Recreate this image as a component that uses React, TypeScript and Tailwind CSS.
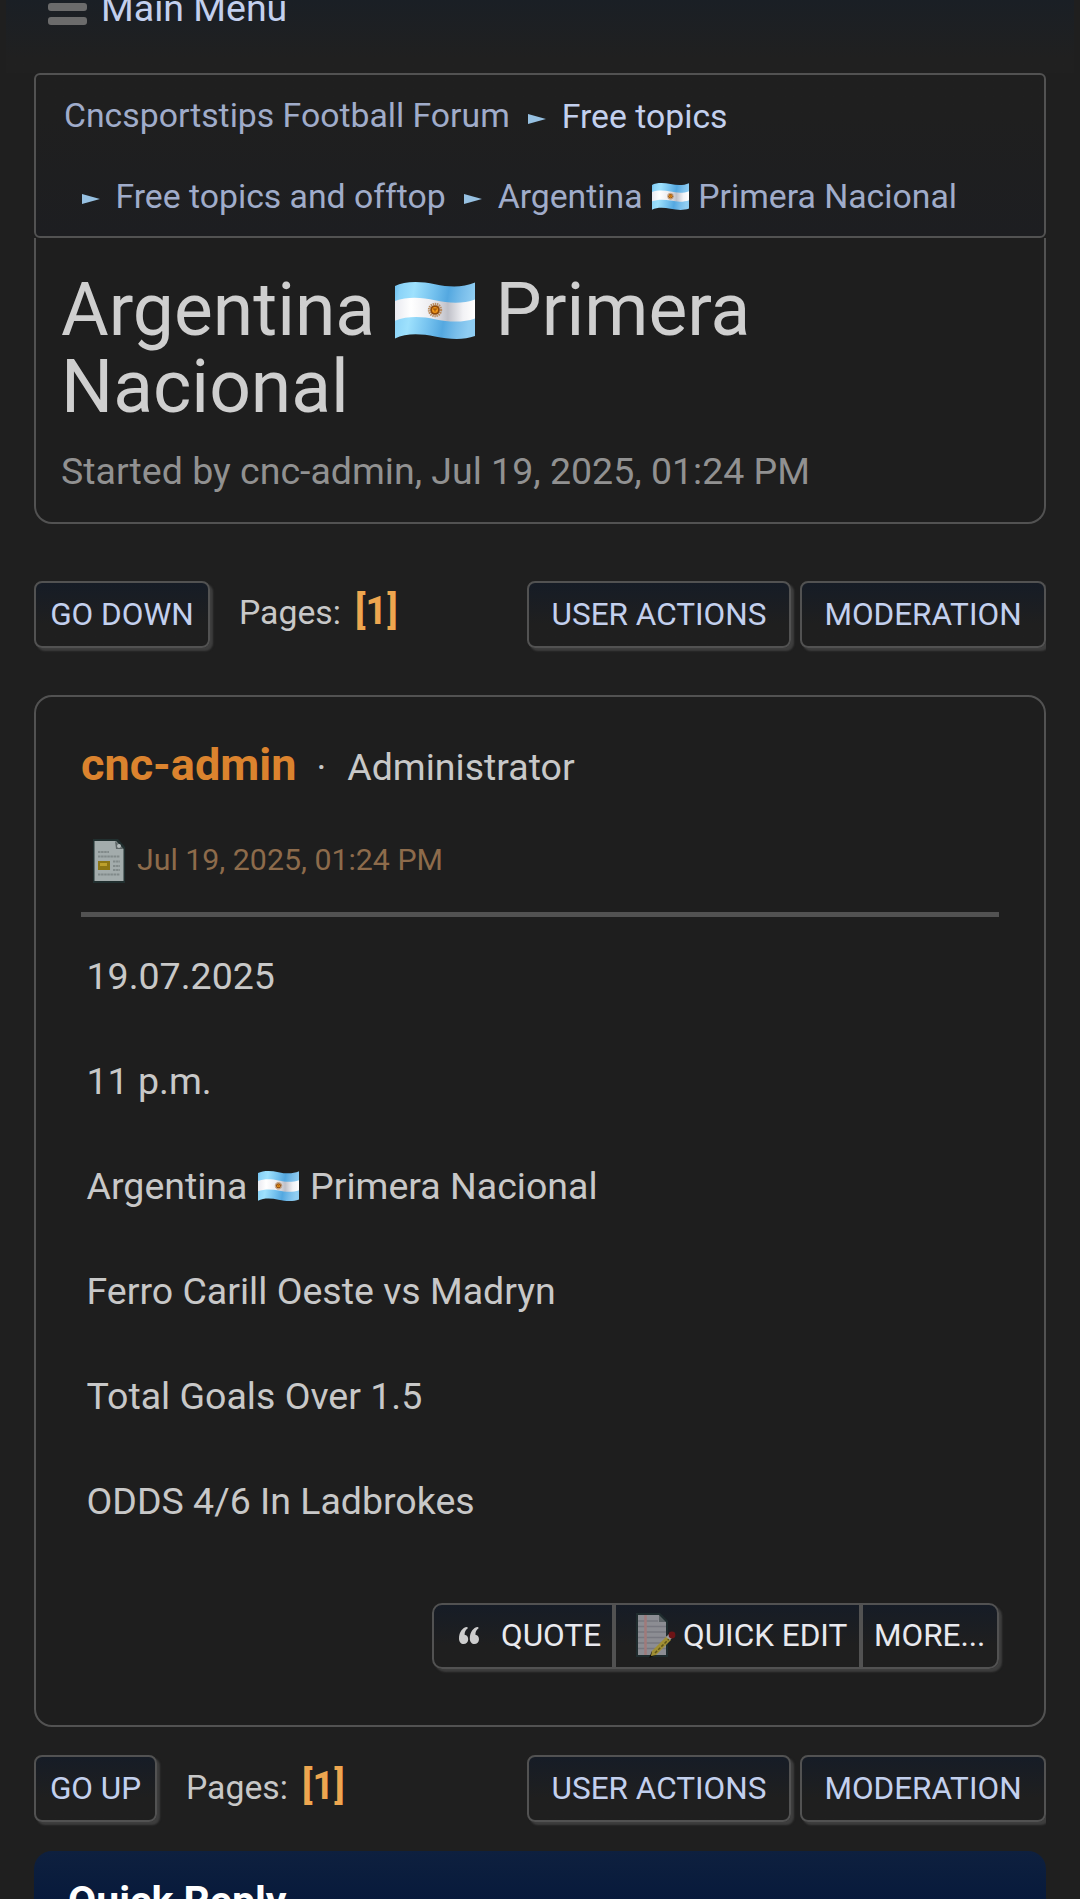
import { ReactNode } from "react";
import { twMerge } from "tailwind-merge";

function ArgentinaFlag({ className }: { className?: string }) {
  return (
    <svg
      viewBox="0 0 80 57"
      preserveAspectRatio="none"
      className={twMerge("inline-block", className)}
      role="img"
      aria-label="Argentina flag"
    >
      <defs>
        <linearGradient id="flag-blue" x1="0" x2="1" y1="0" y2="0.12">
          <stop offset="0" stopColor="#6dbfee" />
          <stop offset="0.08" stopColor="#8cd4f8" />
          <stop offset="0.25" stopColor="#9ee1fd" />
          <stop offset="0.5" stopColor="#74c1ee" />
          <stop offset="0.68" stopColor="#54a8e0" />
          <stop offset="0.85" stopColor="#78bdea" />
          <stop offset="1" stopColor="#8fcdf2" />
        </linearGradient>
        <linearGradient id="flag-white" x1="0" x2="1" y1="0" y2="0">
          <stop offset="0" stopColor="#e9eaf0" />
          <stop offset="0.2" stopColor="#ffffff" />
          <stop offset="0.45" stopColor="#ececf0" />
          <stop offset="0.66" stopColor="#bfc0c8" />
          <stop offset="0.85" stopColor="#f2f2f5" />
          <stop offset="1" stopColor="#ffffff" />
        </linearGradient>
      </defs>
      <path
        d="M0 4C9-.8 25-1 40 2.2S68 5.500 80 .5V54C68 58.500 54 57.300 40 54.500S11 51 0 56.500Z"
        fill="url(#flag-blue)"
      />
      <path
        d="M0 19C12 14.500 27 15.300 40 18.200S68 22 80 17.500V36.500C68 41 53 40 40 37.200S12 34 0 38.700Z"
        fill="url(#flag-white)"
      />
      <circle cx="40" cy="28" r="6" fill="none" stroke="#b98a5c" strokeWidth="2.400" strokeDasharray="1.400 0.700" />
      <circle cx="40" cy="28" r="4.800" fill="#8f4a0a" />
      <circle cx="40" cy="28" r="3" fill="#f0971a" />
      <path d="M38 27h4M40 27v2.500" stroke="#8f4a0a" strokeWidth="1" />
    </svg>
  );
}

function Arrow({ className }: { className?: string }) {
  return (
    <svg viewBox="0 0 18 10" className={twMerge("h-2.5 w-[18px] shrink-0", className)}>
      <path d="M0 0L18 5L0 10Z" fill="#97c1e2" />
    </svg>
  );
}

function PostIcon() {
  return (
    <svg viewBox="0 0 32 44" className="h-11 w-8 shrink-0">
      <path d="M0 0H25L32 8V44H0Z" fill="#233a3b" opacity="0.6" />
      <path d="M1.500 2H23L30.500 10V42H1.500Z" fill="#a3acac" />
      <path d="M22 2L30.500 10H23Z" fill="#5c6566" />
      <circle cx="26" cy="7" r="2" fill="#b4bcbc" />
      <path
        d="M5 13H16M5 17.500H27M20 22.500H27M20 27H27M20 31H27M5 35.500H27"
        stroke="#818a8a"
        strokeWidth="2"
        strokeDasharray="2.500 0.600"
      />
      <rect x="5" y="22" width="12" height="9" fill="#8d7614" />
      <rect x="7" y="24" width="7" height="3" fill="#bda02c" />
    </svg>
  );
}

function QuoteIcon() {
  return (
    <svg viewBox="0 0 20 17" className="h-[17px] w-5 shrink-0">
      <path
        d="M8 0C3.500 .5 0 5 0 11.500C0 15 2 17 4.600 17C7.200 17 9.200 15.200 9.200 12.300C9.200 9.600 7.600 8 5.600 7.800C5.600 5 6.500 3 9 1Z"
        fill="#cdcdcd"
      />
      <path
        d="M18.800 0C14.300 .5 10.800 5 10.800 11.500C10.800 15 12.800 17 15.400 17C18 17 20 15.200 20 12.300C20 9.600 18.400 8 16.400 7.800C16.400 5 17.300 3 19.800 1Z"
        fill="#cdcdcd"
      />
    </svg>
  );
}

function EditIcon() {
  return (
    <svg viewBox="0 0 40 46" className="h-[46px] w-10 shrink-0">
      <path d="M0 0H24L32 8V44H0Z" fill="#1f2c2e" />
      <path d="M2 2H23V9H30V42H2Z" fill="#8c8d93" />
      <path d="M2 8H22M2 13.500H30M2 19H30M2 24.500H30M2 30H30M2 35.500H30" stroke="#777880" strokeWidth="1.500" />
      <path d="M23 2L30 9H23Z" fill="#5b6265" />
      <path d="M9.500 2V42" stroke="#a07a7a" strokeWidth="2.500" />
      <path d="M13 45L16 38L20 42Z" fill="#120f06" />
      <path d="M16 38L31 23L35 27L20 42L15 43Z" fill="#a08f34" />
      <path d="M19 40L33 26" stroke="#5f5418" strokeWidth="1.500" strokeDasharray="3 1.500" />
      <path d="M30 24L33 21L36 25L34 27Z" fill="#9a9c9f" />
      <circle cx="36" cy="22" r="3.400" fill="#6e1416" />
    </svg>
  );
}

function BarButton({ children, className }: { children: ReactNode; className: string }) {
  return (
    <button
      type="button"
      className={twMerge(
        "flex h-[67px] shrink-0 items-center justify-center whitespace-nowrap rounded-lg border-2 border-[#525252] bg-linear-to-b from-[#161c26] to-[#1f1f1f] to-65% text-[31.5px] text-[#c3d0ee] shadow-[3px_3px_2px_0px_#3e3e3e]",
        className
      )}
    >
      {children}
    </button>
  );
}

function TopicBar({ label, labelClass, pagesClass }: { label: string; labelClass: string; pagesClass: string }) {
  return (
    <div className="flex h-[67px] items-start overflow-x-clip">
      <BarButton className={labelClass}>{label}</BarButton>
      <p className={twMerge("ml-[29px] text-[33.75px] leading-[60px] text-[#c8c8c8]", pagesClass)}>
        Pages:
        <span className="ml-3.5 text-[38px] font-bold text-[#eea64f]">[1]</span>
      </p>
      <div className="ml-auto flex gap-[9px]">
        <BarButton className="w-[264px]">USER ACTIONS</BarButton>
        <BarButton className="w-[246px]">MODERATION</BarButton>
      </div>
    </div>
  );
}

function QuickButton({ children, className }: { children: ReactNode; className: string }) {
  return (
    <button
      type="button"
      className={twMerge(
        "flex h-full items-center whitespace-nowrap border-2 border-[#525252] bg-linear-to-b from-[#161c26] to-[#1f1f1f] to-65% pb-px text-[31.5px] text-[#e9e9ee]",
        className
      )}
    >
      {children}
    </button>
  );
}

export default function App() {
  return (
    <div className="h-[1899px] w-[1080px] overflow-hidden bg-[#1f1f1f] font-[Roboto,sans-serif]">
      <header className="mx-1.5 flex h-[73px] bg-linear-to-b from-[#1a1f25] to-[#202020] to-80% pl-[42px]">
        <div className="-mt-[11px] flex w-[39px] flex-col gap-1.5">
          <span className="h-2 rounded-[3px] bg-[#6b6b6b]" />
          <span className="h-2 rounded-[3px] bg-[#6b6b6b]" />
          <span className="h-2 rounded-[3px] bg-[#6b6b6b]" />
        </div>
        <span className="-mt-[15px] ml-3.5 text-[37.5px] leading-[46px] text-[#c3d0ee]">Main Menu</span>
      </header>

      <main className="px-[34px]">
        <nav className="h-[165px] rounded-md border-2 border-[#525252] bg-linear-to-b from-[#1f1f1f] from-25% to-[#1d1e21] text-[33.75px] leading-[81px] text-[#a0acca]">
          <div className="flex items-center pl-7">
            <span>Cncsportstips Football Forum</span>
            <Arrow className="ml-[18px] mt-1.5" />
            <span className="-mb-px ml-4 mt-px text-[#c3d0ee]">Free topics</span>
          </div>
          <div className="flex items-center pl-[46px]">
            <Arrow className="mt-1" />
            <span className="ml-[15.5px]">Free topics and offtop</span>
            <Arrow className="ml-[18.5px] mt-1" />
            <span className="ml-[15.5px]">
              Argentina <ArgentinaFlag className="mx-px h-[27px] w-[37px] align-[-2px]" /> Primera Nacional
            </span>
          </div>
        </nav>

        <section className="h-[286px] rounded-b-[18px] border-2 border-t-0 border-[#525252] bg-[#1e1e1e] pl-[25px] pt-[34px]">
          <h1 className="text-[73.2px] leading-[77px] text-[#cfcfcf]">
            Argentina <ArgentinaFlag className="mx-0.5 h-[57px] w-20 align-[-4px]" /> Primera Nacional
          </h1>
          <p className="mt-[21px] text-[37.5px] leading-[48px] text-[#919191]">
            Started by cnc-admin, Jul 19, 2025, 01:24 PM
          </p>
        </section>

        <div className="mt-[57px]">
          <TopicBar label="GO DOWN" labelClass="w-[176px]" pagesClass="mt-0" />
        </div>

        <article className="mt-[47px] h-[1032px] rounded-[18px] border-2 border-[#525252] bg-[#1e1e1e] px-[45px] pt-[43px]">
          <div className="flex h-[50px] items-baseline text-[37.5px] leading-[50px] text-[#c8c8c8]">
            <h4 className="text-[45px] font-bold text-[#db832e]">cnc-admin</h4>
            <span className="ml-5">·</span>
            <span className="ml-[21px]">Administrator</span>
          </div>

          <div className="mt-[49px] flex h-11 items-center pl-3">
            <PostIcon />
            <span className="mb-[3px] ml-3 text-[30.3px] leading-[42px] text-[#8d6b4b]">
              Jul 19, 2025, 01:24 PM
            </span>
          </div>
          <hr className="mt-[29px] h-[5px] border-0 bg-[#525252]" />

          <div className="mt-[7px] pl-[5.5px] text-[37.5px] leading-[105px] text-[#c8c8c8]">
            <p>19.07.2025</p>
            <p>11 p.m.</p>
            <p>
              Argentina <ArgentinaFlag className="mx-[1.5px] h-[30px] w-[41px] align-[-2px]" /> Primera Nacional
            </p>
            <p>Ferro Carill Oeste vs Madryn</p>
            <p>Total Goals Over 1.5</p>
            <p>ODDS 4/6 In Ladbrokes</p>
          </div>

          <div className="ml-auto mt-[49px] flex h-[66px] w-[567px] rounded-[10px] shadow-[3px_3px_2px_0px_#3e3e3e]">
            <QuickButton className="w-[182px] rounded-l-[10px] pl-[25px]">
              <QuoteIcon />
              <span className="ml-[22px]">QUOTE</span>
            </QuickButton>
            <QuickButton className="w-[247px] pl-5">
              <EditIcon />
              <span className="ml-[7px]">QUICK EDIT</span>
            </QuickButton>
            <QuickButton className="w-[138px] rounded-r-[10px] pl-[11px]">MORE...</QuickButton>
          </div>
        </article>

        <div className="mt-7">
          <TopicBar label="GO UP" labelClass="w-[123px]" pagesClass="mt-px" />
        </div>

        <section className="mt-[29px] h-40 rounded-t-[18px] bg-linear-to-b from-[#0e203f] to-[#06183a] to-40% pl-[34px] pt-[25px]">
          <h3 className="text-[41px] font-bold leading-[50px] text-white">Quick Reply</h3>
        </section>
      </main>
    </div>
  );
}
